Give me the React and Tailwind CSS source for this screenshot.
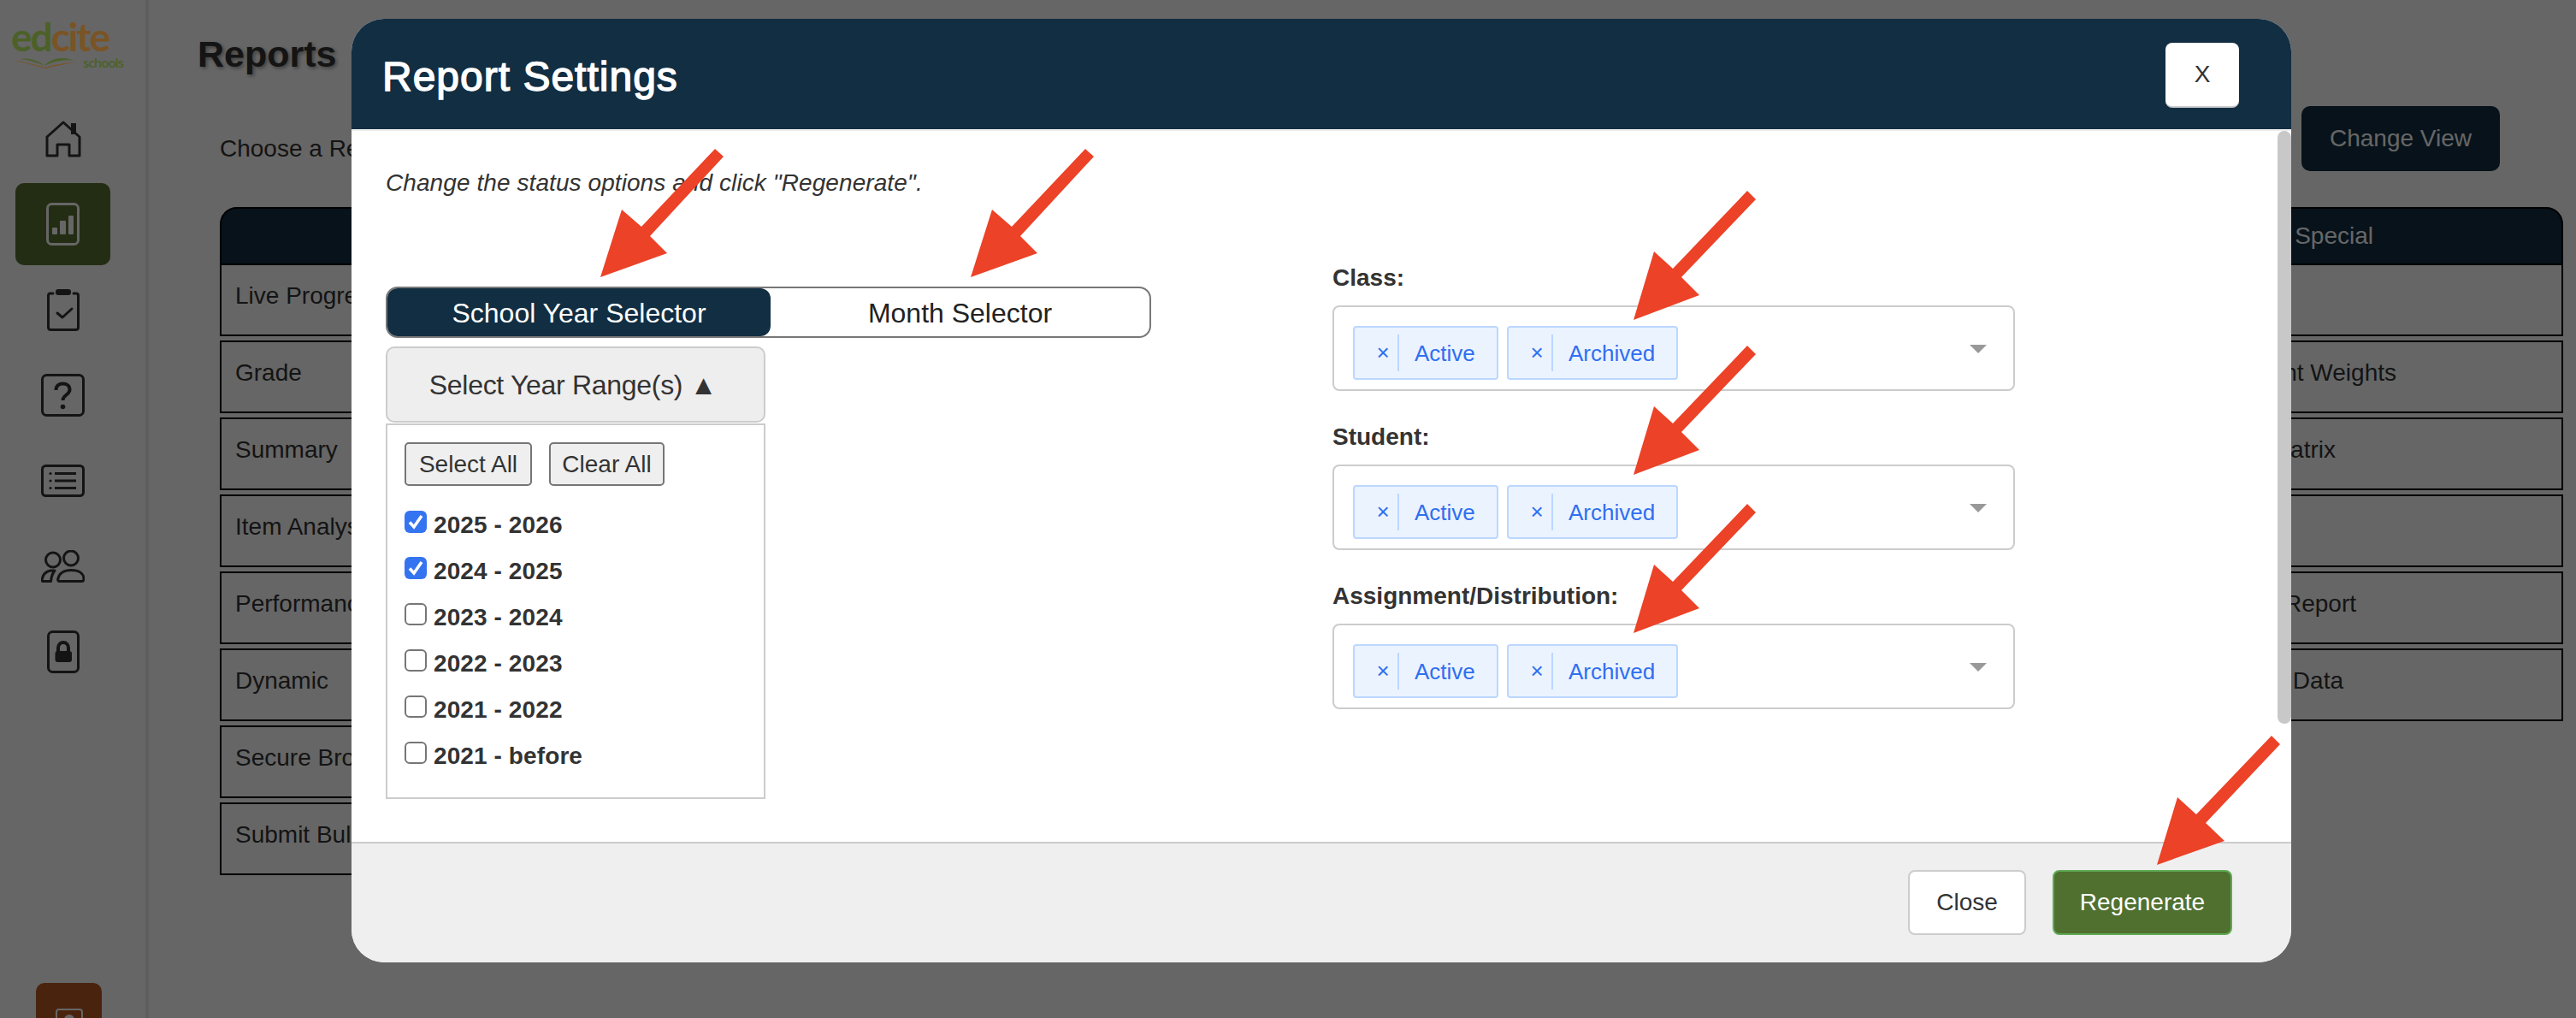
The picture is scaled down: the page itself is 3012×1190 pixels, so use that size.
const leftRows = ['Live Progress', 'Grade', 'Summary', 'Item Analysis', 'Performance', 'Dynamic', 'Secure Browser', 'Submit Bulk'];

const rightRows = [
  { label: '', pad: 'pr-[193px]' },
  { label: 'Assignment Weights', pad: 'pr-[193px]' },
  { label: 'Standards Matrix', pad: 'pr-[264px]' },
  { label: '', pad: 'pr-[193px]' },
  { label: 'Custom Report', pad: 'pr-[240px]' },
  { label: 'Raw Data', pad: 'pr-[255px]' },
];

const years = [
  { label: '2025 - 2026', checked: true },
  { label: '2024 - 2025', checked: true },
  { label: '2023 - 2024', checked: false },
  { label: '2022 - 2023', checked: false },
  { label: '2021 - 2022', checked: false },
  { label: '2021 - before', checked: false },
];

const HomeIcon = () => (
  <svg width="42" height="43" viewBox="0 0 42 43" fill="none" stroke="#333" strokeWidth="3" strokeLinejoin="round">
    <path d="M2 41V19L21 2L40 19V41H28V28H14V41Z" />
    <rect x="30" y="3" width="6" height="13" fill="#333" stroke="none" />
  </svg>
);

const ChartIcon = () => (
  <svg width="39" height="50" viewBox="0 0 39 50" fill="none">
    <rect x="1.500" y="1.500" width="36" height="47" rx="5" stroke="#fff" strokeWidth="3" />
    <rect x="7" y="29" width="6" height="8" rx="1" fill="#fff" />
    <rect x="16" y="21" width="7" height="16" rx="1" fill="#fff" />
    <rect x="26" y="15" width="6" height="22" rx="1" fill="#fff" />
  </svg>
);

const ClipboardIcon = () => (
  <svg width="38" height="49" viewBox="0 0 38 49" fill="none" stroke="#333" strokeWidth="3" strokeLinecap="round" strokeLinejoin="round">
    <path d="M7 5H4Q1.500 5 1.500 7.500V44.500Q1.500 47.500 4.500 47.500H33.500Q36.500 47.500 36.500 44.500V7.500Q36.500 5 34 5H31" />
    <rect x="10" y="0" width="18" height="7" rx="3" fill="#333" stroke="none" />
    <path d="M12 28L18 33L29 23" />
  </svg>
);

const QuestionIcon = () => (
  <svg width="51" height="50" viewBox="0 0 51 50" fill="none" stroke="#333" strokeWidth="3">
    <rect x="1.500" y="1.500" width="48" height="47" rx="5" />
    <path d="M17.500 19C17.500 14 21 11.500 25.500 11.500C30 11.500 33.500 14 33.500 18.500C33.500 24.500 25.500 24.500 25.500 31" strokeWidth="4" />
    <circle cx="25.500" cy="38.500" r="2.800" fill="#333" stroke="none" />
  </svg>
);

const ListIcon = () => (
  <svg width="51" height="38" viewBox="0 0 51 38" fill="none" stroke="#333" strokeWidth="3">
    <rect x="1.500" y="1.500" width="48" height="35" rx="4" />
    <path d="M16 10.500H41M16 19H41M16 27.500H41" />
    <circle cx="11" cy="10.500" r="1.600" fill="#333" stroke="none" />
    <circle cx="11" cy="19" r="1.600" fill="#333" stroke="none" />
    <circle cx="11" cy="27.500" r="1.600" fill="#333" stroke="none" />
  </svg>
);

const UsersIcon = () => (
  <svg width="51" height="38" viewBox="0 0 51 38" fill="none" stroke="#333" strokeWidth="3" strokeLinejoin="round">
    <circle cx="14" cy="11.500" r="8.500" />
    <circle cx="35" cy="9.500" r="8.500" />
    <path d="M21 36.500C19.500 36.500 19.500 34.500 20 33C21.500 27 27 23.500 35.500 23.500C44 23.500 49.500 27 50 33C50 35 49.500 36.500 48 36.500Z" />
    <path d="M2 36.500C1 36.500 1.200 34.500 1.500 33C2.500 28 6 25 11 24H16C13.500 27 12 31 11.500 36.500Z" />
  </svg>
);

const LockIcon = () => (
  <svg width="38" height="50" viewBox="0 0 38 50" fill="none">
    <rect x="1.500" y="1.500" width="35" height="47" rx="5" stroke="#333" strokeWidth="3" />
    <rect x="9.500" y="24" width="19.500" height="13" rx="3" fill="#333" />
    <path d="M13 25V20.500C13 16.500 15.500 14 19 14C22.500 14 25 16.500 25 20.500V25" stroke="#333" strokeWidth="4" />
  </svg>
);

const navItems = [
  { icon: <HomeIcon />, active: false },
  { icon: <ChartIcon />, active: true },
  { icon: <ClipboardIcon />, active: false },
  { icon: <QuestionIcon />, active: false },
  { icon: <ListIcon />, active: false },
  { icon: <UsersIcon />, active: false },
  { icon: <LockIcon />, active: false },
];

// the logo is not dimmed as much as the rest of the page, so it sits over the backdrop
const Logo = () => (
  <div className="relative z-10 h-[114px] shrink-0 pl-[13px] pt-[21px]">
    <div className="flex text-[46px] leading-[44px] font-bold font-['Lato',sans-serif]">
      <span className="text-[#4c6128] tracking-[-2px]">ed</span>
      <span className="text-[#7a5424] tracking-[-2px]">cite</span>
    </div>
    <div className="flex items-center gap-[5px] pl-[1px] -mt-[1px]">
      <svg width="78" height="13" viewBox="0 0 78 13">
        <path d="M0 3C14 5 28 9 38 12C48 9 62 6 77 6C62 7 48 11 38 13C28 10 14 6 0 3Z" fill="#7a5424" />
        <path d="M10 2C20 0 32 4 38 10C30 6 20 3 10 2Z" fill="#4c6128" />
        <path d="M38 10C44 3 54 0 64 1.500C66 2 70 3 74 4C62 2 48 5 38 10Z" fill="#4c6128" />
      </svg>
      <span className="text-[15px] leading-[18px] font-semibold tracking-[-1px] text-[#4c6128] font-['Open_Sans',sans-serif]">schools</span>
    </div>
  </div>
);

const Sidebar = () => (
  <aside className="w-[174px] h-[1190px] shrink-0 border-r-4 border-[#ececec] flex flex-col">
    <Logo />
    <nav className="flex flex-col gap-1 px-[18px]">
      {navItems.map((item, i) => (
        <div
          key={i}
          className={item.active ? 'h-24 w-[111px] rounded-[10px] bg-[#577032] flex items-center justify-center' : 'h-24 w-[111px] flex items-center justify-center'}
        >
          {item.icon}
        </div>
      ))}
    </nav>
    <div className="shrink-0 mt-[339px] ml-[42px] w-[77px] h-24 rounded-[10px] bg-[#b95723] flex justify-center pt-[30px]">
      <svg width="32" height="40" viewBox="0 0 32 40" fill="none">
        <rect x="1" y="1" width="30" height="38" rx="3" stroke="#fff" strokeWidth="2" />
        <circle cx="16" cy="13" r="6" fill="#fff" />
      </svg>
    </div>
  </aside>
);

const ReportTable = () => (
  <div className="mt-[42px] text-[28px] leading-[40px] text-[#333]">
    <div className="h-[68px] bg-[#122e42] border-2 border-black rounded-t-[20px] flex items-center justify-end pr-[220px] text-white">
      Special
    </div>
    <div className="flex">
      <div className="flex-1 flex flex-col">
        {leftRows.map((label, i) => (
          <div
            key={label}
            className={i === 0 ? 'h-[83px] border-2 border-t-0 border-black pl-[16px] pt-[16px]' : 'h-[85px] mt-[5px] border-2 border-black pl-[16px] pt-[16px]'}
          >
            {label}
          </div>
        ))}
      </div>
      <div className="flex-1 flex flex-col">
        {rightRows.map((row, i) => (
          <div
            key={i}
            className={`${i === 0 ? 'h-[83px] border-t-0' : 'h-[85px] mt-[5px]'} border-2 border-black pt-[16px] text-right ${row.pad}`}
          >
            {row.label}
          </div>
        ))}
      </div>
    </div>
  </div>
);

const Chip = ({ label, width }) => (
  <div className={`h-[63px] ${width} flex items-center bg-[#ebf3ff] border-2 border-[#bcd7ff] rounded-[4px] text-[#2f6ff0] text-[26px]`}>
    <span className="w-[52px] h-[43px] border-r-2 border-[#bcd7ff] flex items-center justify-center text-[26px] pl-[16px]">×</span>
    <span className="pl-[18px] pt-[2px]">{label}</span>
  </div>
);

const StatusSelect = ({ label }) => (
  <div className="mb-[34px]">
    <div className="h-10 mb-3 text-[28px] leading-[40px] font-bold text-[#333]">{label}</div>
    <div className="h-[100px] w-[798px] border-2 border-[#ccc] rounded-[8px] pl-[22px] pr-[31px] pt-[22px] flex">
      <div className="flex gap-[10px]">
        <Chip label="Active" width="w-[170px]" />
        <Chip label="Archived" width="w-[200px]" />
      </div>
      <svg className="ml-auto mt-[22px]" width="20" height="10" viewBox="0 0 20 10">
        <path d="M0 0H20L10 10Z" fill="#999" />
      </svg>
    </div>
  </div>
);

const YearSelector = () => (
  <div className="w-[444px] mt-[1px] h-[439px] border-2 border-[#ccc] p-[20px]">
    <div className="flex gap-5">
      <button className="h-[51px] w-[149px] border-2 border-[#767676] rounded-[5px] bg-[#efefef] text-[28px] text-[#333]">Select All</button>
      <button className="h-[51px] w-[135px] border-2 border-[#767676] rounded-[5px] bg-[#efefef] text-[28px] text-[#333]">Clear All</button>
    </div>
    <div className="mt-[29px] flex flex-col gap-[28px]">
      {years.map((year) => (
        <div key={year.label} className="h-[26px] flex gap-2 text-[28px] font-bold text-[#333]">
          {year.checked ? (
            <span className="w-[26px] h-[26px] rounded-[6px] bg-[#3574f0] flex items-center justify-center">
              <svg width="20" height="20" viewBox="0 0 20 20" fill="none">
                <path d="M3 10.500L8 16L17 3" stroke="#fff" strokeWidth="3.500" />
              </svg>
            </span>
          ) : (
            <span className="w-[26px] h-[26px] rounded-[6px] bg-white border-2 border-[#767676]" />
          )}
          <span className="leading-[34px] tracking-[0.1px]">{year.label}</span>
        </div>
      ))}
    </div>
  </div>
);

const arrows = [
  '702,324 727,245 750,265 836,174 846,183 760,276 780,296',
  '1135,324 1160,245 1183,265 1269,174 1279,183 1193,276 1213,296',
  '1910,374 1934,294 1956,314 2043,223 2053,233 1966,324 1987,345',
  '1910,555 1934,475 1956,495 2043,404 2053,414 1966,505 1987,526',
  '1910,740 1934,660 1956,680 2043,589 2053,599 1966,690 1987,711',
  '2522,1011 2546,932 2568,952 2656,860 2666,870 2579,962 2601,983',
];

const SettingsModal = () => (
  <div className="absolute left-[411px] top-[22px] w-[2268px] h-[1103px] rounded-[38px] overflow-hidden bg-white flex flex-col">
    <header className="h-[131px] shrink-0 bg-[#122e42] border-b-2 border-[#eee] flex items-center justify-between pl-[36px] pr-[61px]">
      <h2 className="text-[48px] tracking-[1px] text-white [-webkit-text-stroke:1.4px_white] mt-[7px]">Report Settings</h2>
      <button className="w-[86px] h-[76px] mt-[3px] bg-white border-b-2 border-[#ccc] rounded-[8px] text-[28px] text-[#333]">X</button>
    </header>
    <div className="relative flex-1 flex pl-[40px]">
      <div className="w-[895px] shrink-0 pt-[41px]">
        <p className="text-[28px] leading-[40px] italic tracking-[0.08px] text-[#333]">Change the status options and click "Regenerate".</p>
        <div className="mt-[101px] w-[895px] h-[60px] border-2 border-[#777] rounded-[14px] flex text-[32px] leading-[40px]">
          <div className="w-[448px] bg-[#122e42] text-white rounded-[12px] flex items-center justify-center pt-[2px]">School Year Selector</div>
          <div className="flex-1 text-[#222] flex items-center justify-center pt-[2px]">Month Selector</div>
        </div>
        <button className="mt-[10px] w-[444px] h-[89px] bg-[#eee] border-2 border-[#ccc] rounded-[10px] pr-[6px] text-[32px] tracking-[-0.3px] text-[#333]">Select Year Range(s) ▲</button>
        <YearSelector />
      </div>
      <div className="ml-[212px] pt-[152px]">
        <StatusSelect label="Class:" />
        <StatusSelect label="Student:" />
        <StatusSelect label="Assignment/Distribution:" />
      </div>
      <div className="absolute right-0 top-0 w-4 h-[693px] rounded-full bg-[#c8c8c8]" />
    </div>
    <footer className="h-[141px] shrink-0 bg-[#efefef] border-t-2 border-[#ccc] flex justify-end gap-[31px] pt-[31px] pr-[69px] text-[28px]">
      <button className="w-[138px] h-[76px] bg-white border-2 border-[#ccc] rounded-[8px] text-[#333]">Close</button>
      <button className="w-[210px] h-[76px] bg-[#507030] border-2 border-[#5faa55] rounded-[8px] text-white">Regenerate</button>
    </footer>
  </div>
);

export default function App() {
  return (
    <div className="relative w-[3012px] h-[1190px] overflow-hidden bg-white flex font-['Liberation_Sans',Arial,sans-serif]">
      <Sidebar />
      <main className="flex-1 pl-[83px] pr-[15px] pt-[38px]">
        <h1 className="text-[43px] leading-[50px] font-bold text-[#333] -ml-[26px] [text-shadow:2px_2px_4px_rgba(0,0,0,0.4)]">Reports</h1>
        <div className="mt-[36px] flex justify-between items-start">
          <p className="mt-[30px] text-[28px] leading-[40px] text-[#333]">Choose a Report</p>
          <button className="mr-[74px] w-[232px] h-[76px] bg-[#122e42] rounded-[10px] text-[28px] text-white">Change View</button>
        </div>
        <ReportTable />
      </main>
      <div className="absolute inset-0 bg-black/60" />
      <SettingsModal />
      <svg className="absolute inset-0 pointer-events-none" width="3012" height="1190" viewBox="0 0 3012 1190">
        {arrows.map((points) => (
          <polygon key={points} points={points} fill="#ec4227" />
        ))}
      </svg>
    </div>
  );
}
